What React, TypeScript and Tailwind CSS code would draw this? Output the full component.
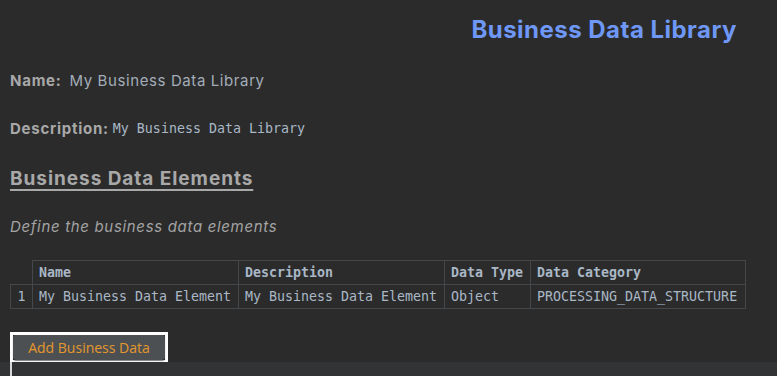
const mono = "font-['DejaVu_Sans_Mono','Liberation_Mono',monospace]";

const rows = [
  {
    name: "My Business Data Element",
    description: "My Business Data Element",
    type: "Object",
    category: "PROCESSING_DATA_STRUCTURE",
  },
];

export default function App() {
  return (
    <div className="min-h-screen w-full bg-[#2b2b2b] font-['Inter','Noto_Sans',sans-serif] text-[#a9b7c6] flex flex-col">
      <header className="flex justify-end pr-[40px] pt-[15px]">
        <h1 className="text-[24px] leading-[30px] font-bold tracking-[0.02em] text-[#6e97f6]">
          Business Data Library
        </h1>
      </header>

      <div className="px-[10px]">
        <div className="mt-[26px] flex items-center gap-[8px] h-[20px]">
          <span className="text-[15px] font-bold tracking-[0.05em] text-[#a8a8a8]">Name:</span>
          <span className="text-[15px] tracking-[0.04em] text-[#a3adb8]">My Business Data Library</span>
        </div>

        <div className="mt-[28px] flex items-center gap-[4px] h-[20px]">
          <span className="text-[15px] font-bold tracking-[0.05em] text-[#a8a8a8]">Description:</span>
          <span className={`${mono} text-[13.3px]`}>My Business Data Library</span>
        </div>

        <h2 className="mt-[28px] h-[24px] leading-[24px] text-[19px] font-bold tracking-[0.05em] text-[#a8a8a8] underline underline-offset-[4px] decoration-[1.5px]">
          Business Data Elements
        </h2>

        <p className="mt-[26px] h-[20px] leading-[20px] text-[15px] italic tracking-[0.045em] text-[#a3a3a3]">
          Define the business data elements
        </p>

        <table className={`${mono} mt-[23px] border-collapse text-[13.3px] leading-[22px]`}>
          <thead>
            <tr>
              <th className="w-[22px]" />
              <th className="w-[206px] border border-[#45484a] px-[6px] pt-[1px] text-left font-bold">Name</th>
              <th className="w-[206px] border border-[#45484a] px-[6px] pt-[1px] text-left font-bold">Description</th>
              <th className="w-[86px] border border-[#45484a] px-[6px] pt-[1px] text-left font-bold">Data Type</th>
              <th className="w-[215px] border border-[#45484a] px-[6px] pt-[1px] text-left font-bold">Data Category</th>
            </tr>
          </thead>
          <tbody>
            {rows.map((r, i) => (
              <tr key={i}>
                <td className="border border-[#45484a] pt-[1px] text-center">{i + 1}</td>
                <td className="border border-[#45484a] px-[6px] pt-[1px] whitespace-nowrap">{r.name}</td>
                <td className="border border-[#45484a] px-[6px] pt-[1px] whitespace-nowrap">{r.description}</td>
                <td className="border border-[#45484a] px-[6px] pt-[1px] whitespace-nowrap">{r.type}</td>
                <td className="border border-[#45484a] px-[6px] pt-[1px] whitespace-nowrap">{r.category}</td>
              </tr>
            ))}
          </tbody>
        </table>

        <div className="mt-[23px] w-[158px] h-[30px] border-[3px] border-white border-b-[2px]">
          <button className="w-full h-full rounded-[3px] bg-[#4c5052] shadow-[0_1px_1px_rgba(0,0,0,0.5)] text-[14px] text-[#e4982e] font-['Open_Sans','Noto_Sans',sans-serif]">
            Add Business Data
          </button>
        </div>
      </div>

      <div className="flex-1 bg-[#313335] pl-[10px]">
        <div className="h-full min-h-[20px] border-l-2 border-[#d8d8d8]" />
      </div>
    </div>
  );
}
